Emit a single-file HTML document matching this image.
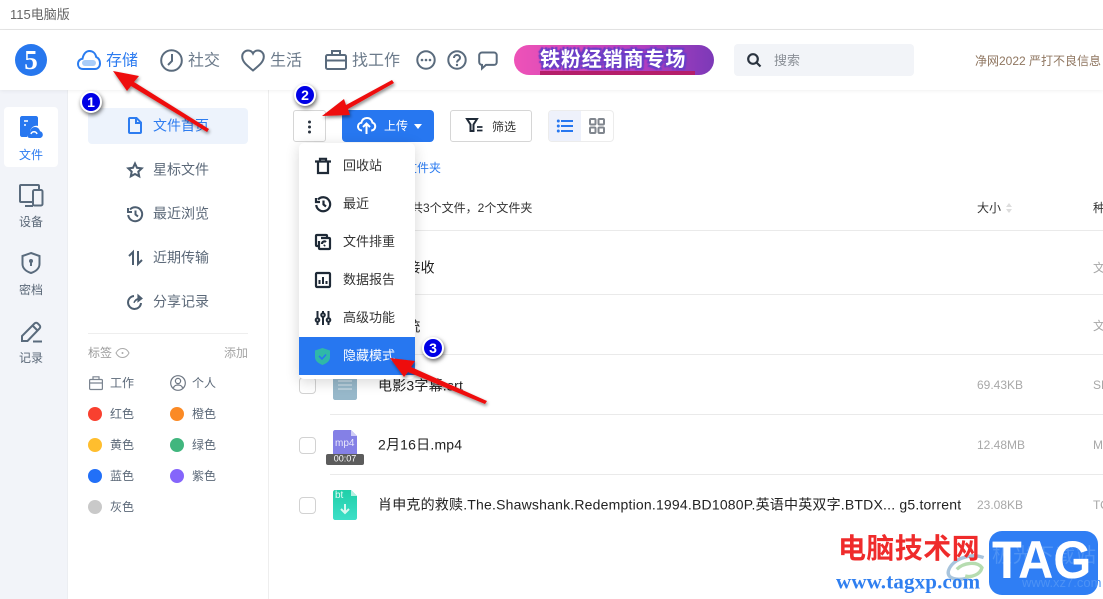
<!DOCTYPE html>
<html lang="zh"><head><meta charset="utf-8"><title>115电脑版</title>
<style>
html,body{margin:0;padding:0;width:1103px;height:599px;overflow:hidden;background:#fff}
body{position:relative;font-family:"Liberation Sans","Noto Sans CJK SC",sans-serif;color:#222}
.a{position:absolute;white-space:nowrap}
.t{position:absolute;white-space:nowrap;transform:translateY(-50%);line-height:1.2}
svg{position:absolute;overflow:visible}
.ic{fill:none;stroke:#5a6b7d;stroke-width:2}
.side{font-size:14px;color:#5b6878}
.rail{font-size:12px;color:#5b6878;width:68px;text-align:center;left:0}
.tag{font-size:13px;color:#5b6878}
.dot{position:absolute;width:14px;height:14px;border-radius:50%}
.mi{font-size:13px;color:#333;left:343px}
.si{fill:none;stroke:#1f2a37;stroke-width:2}
.line{position:absolute;left:330px;right:0;height:1px;background:#eaeaea}
.cb{position:absolute;left:299px;width:15px;height:15px;border:1px solid #d2d2d2;border-radius:4px;background:#fff}
.fn{font-size:14px;color:#222;left:378px;letter-spacing:.2px}
.sz{font-size:12px;color:#a8a8a8;left:977px}
.ty{font-size:12px;color:#a8a8a8;left:1093px}
.badge{position:absolute;width:18px;height:18px;border-radius:50%;background:#0000e6;border:2px solid #fff;box-shadow:1px 2px 4px rgba(0,0,0,.6);color:#fff;font-size:14px;font-weight:bold;text-align:center;line-height:18px}
</style></head><body>

<!-- title bar -->
<div class="a" style="left:0;top:0;width:1103px;height:29px;background:#fff;border-bottom:1px solid #e6e6e6"></div>
<div class="t" style="left:10px;top:15px;font-size:13px;color:#666">115电脑版</div>

<!-- rail + side background -->
<div class="a" style="left:0;top:90px;width:67px;height:509px;background:#f2f4f9;border-right:1px solid #eceef2"></div>
<div class="a" style="left:268px;top:90px;width:1px;height:509px;background:#eeeeee"></div>

<!-- header -->
<div class="a" style="left:0;top:30px;width:1103px;height:60px;background:#fff;box-shadow:0 1px 4px rgba(0,0,0,.06)"></div>
<div class="a" style="left:15px;top:44px;width:32px;height:32px;border-radius:50%;background:#2777ee"></div>
<div class="t" style="left:15px;top:60px;width:32px;text-align:center;font-family:'Liberation Serif',serif;font-weight:bold;font-size:27px;color:#fff">5</div>

<svg style="left:77px;top:49px" width="24" height="22" viewBox="0 0 24 22"><path d="M6 20C2.500 20 1 17.500 1 15c0-3 2-5 4.500-5.300C6.500 5 9 2 12.500 2c3.500 0 6 2.500 6.700 6C21.500 9 23 11.500 23 14.500c0 3-2 5.500-5 5.500z" fill="#fff" stroke="#2a7cf0" stroke-width="2"/><rect x="5" y="11" width="14" height="6" rx="3" fill="#a9cdf8"/></svg>
<div class="t" style="left:106px;top:61px;font-size:16px;color:#2d7cf0">存储</div>
<svg style="left:160px;top:49px" width="23" height="23" viewBox="0 0 23 23"><circle cx="11.500" cy="11.500" r="10.300" class="ic"/><path d="M12 5v7l-4 4" class="ic"/></svg>
<div class="t" style="left:188px;top:61px;font-size:16px;color:#6b7a8a">社交</div>
<svg style="left:241px;top:49px" width="24" height="23" viewBox="0 0 24 23"><path d="M12 21.500C6 16.500 1.200 13 1.200 7.500 1.200 4 4 1.500 7 1.500c2 0 4 1 5 3 1-2 3-3 5-3 3 0 5.800 2.500 5.800 6 0 5.500-4.800 9-10.800 14z" class="ic"/></svg>
<div class="t" style="left:270px;top:61px;font-size:16px;color:#6b7a8a">生活</div>
<svg style="left:325px;top:49px" width="22" height="22" viewBox="0 0 22 22"><rect x="1" y="6" width="20" height="14" rx="1.500" class="ic"/><path d="M7 6V2h8v4M1 11.500h20" class="ic"/></svg>
<div class="t" style="left:352px;top:61px;font-size:16px;color:#6b7a8a">找工作</div>
<svg style="left:416px;top:50px" width="20" height="20" viewBox="0 0 20 20"><circle cx="10" cy="10" r="8.700" class="ic"/><circle cx="6" cy="10" r="1.300" fill="#5a6b7d"/><circle cx="10" cy="10" r="1.300" fill="#5a6b7d"/><circle cx="14" cy="10" r="1.300" fill="#5a6b7d"/></svg>
<svg style="left:447px;top:50px" width="20" height="20" viewBox="0 0 20 20"><circle cx="10" cy="10" r="8.700" class="ic"/><path d="M7 8c0-4 6-4 6 0 0 2-3 2-3 4.500" class="ic"/><circle cx="10" cy="15" r="1.200" fill="#5a6b7d"/></svg>
<svg style="left:478px;top:51px" width="20" height="19" viewBox="0 0 20 19"><path d="M4 1.500h12c1.500 0 2.700 1.200 2.700 2.700v7c0 1.500-1.200 2.700-2.700 2.700H8L4 17.500v-3.600C2.500 13.800 1.200 12.600 1.200 11V4.200C1.200 2.700 2.500 1.500 4 1.500z" class="ic"/></svg>

<!-- banner -->
<div class="a" style="left:514px;top:45px;width:200px;height:30px;border-radius:15px;background:linear-gradient(90deg,#ee52b8 0%,#d64ab8 30%,#b13fc0 65%,#7c39b8 100%);overflow:hidden">
<div class="a" style="left:26px;top:26px;width:155px;height:5px;background:#b51f6a"></div></div>
<div class="t" style="left:540px;top:60px;font-size:20px;font-weight:bold;color:#fff;letter-spacing:.9px;text-shadow:0 0 3px #6a3fc8,2px 2px 1px #6a3fc8,-2px -2px 1px #6a3fc8,2px -2px 1px #6a3fc8,-2px 2px 1px #6a3fc8">铁粉经销商专场</div>

<!-- search -->
<div class="a" style="left:734px;top:44px;width:180px;height:32px;background:#f2f4f8;border-radius:4px"></div>
<svg style="left:746px;top:52px" width="17" height="17" viewBox="0 0 17 17"><circle cx="7" cy="7" r="4.800" fill="none" stroke="#2b3440" stroke-width="2.200"/><path d="M10.500 10.500l4 4" stroke="#2b3440" stroke-width="2.200"/></svg>
<div class="t" style="left:774px;top:61px;font-size:13px;color:#8a8f96">搜索</div>
<div class="t" style="left:975px;top:61px;font-size:12px;color:#8f7660">净网2022 严打不良信息</div>

<!-- rail -->
<div class="a" style="left:4px;top:107px;width:54px;height:60px;background:#fff;border-radius:4px"></div>
<svg style="left:20px;top:116px" width="23" height="23" viewBox="0 0 23 23"><path d="M2 0h14c1 0 2 1 2 2v8c-4-1-8 2-8 6-2 0-3 2-3 4v1H2c-1 0-2-1-2-2V2C0 1 1 0 2 0z" fill="#2777f0"/><path d="M4 5h4M4 9h2" stroke="#fff" stroke-width="1.500"/><path d="M10 22c-2 0-3-1.500-3-3.200 0-1.600 1.300-3 3-3 .5-3 2.500-4.800 5-4.800 2.700 0 4.500 2 5 4.200 1.600.3 2.800 1.700 2.800 3.500 0 2-1.500 3.300-3.500 3.300z" fill="#2777f0"/><path d="M11 18c1-3 5-3 6 0" fill="none" stroke="#fff" stroke-width="1.500"/></svg>
<div class="t rail" style="top:155px;color:#2d7cf0;width:62px">文件</div>
<svg style="left:19px;top:184px" width="25" height="23" viewBox="0 0 25 23"><path d="M14 18H2c-.6 0-1-.4-1-1V2c0-.6.4-1 1-1h17c.6 0 1 .4 1 1v3M6 22h8" class="ic" style="stroke-width:2"/><rect x="14" y="6" width="9.500" height="15.500" rx="1.500" class="ic"/></svg>
<div class="t rail" style="top:222px;width:62px">设备</div>
<svg style="left:21px;top:252px" width="20" height="22" viewBox="0 0 20 22"><path d="M10 1l8.500 3v8c0 4.500-4 7.500-8.500 9-4.500-1.500-8.500-4.500-8.500-9V4z" class="ic"/><circle cx="10" cy="9" r="2" fill="#5a6b7d"/><path d="M10 9v5" class="ic"/></svg>
<div class="t rail" style="top:290px;width:62px">密档</div>
<svg style="left:20px;top:320px" width="23" height="23" viewBox="0 0 23 23"><path d="M2 21v-5L14.500 3.500c1-1 2.300-1 3.300 0l1.700 1.700c1 1 1 2.300 0 3.300L7.500 21zM12.500 5.500l5 5M13 21.500h9" class="ic"/></svg>
<div class="t rail" style="top:358px;width:62px">记录</div>

<!-- side -->
<div class="a" style="left:88px;top:108px;width:160px;height:36px;background:#edf3fc;border-radius:4px"></div>
<svg style="left:128px;top:117px" width="14" height="17" viewBox="0 0 14 17"><path d="M2 1h6.500L13 5.500V15c0 .6-.4 1-1 1H2c-.6 0-1-.4-1-1V2c0-.6.4-1 1-1zM8 1v5h5" fill="none" stroke="#2d7cf0" stroke-width="2"/></svg>
<div class="t side" style="left:153px;top:126px;color:#2d7cf0">文件首页</div>
<svg style="left:127px;top:162px" width="16" height="16" viewBox="0 0 16 16"><path d="M8 1.500l2 4.300 4.700.6-3.400 3.200.9 4.700L8 12l-4.200 2.300.9-4.700L1.300 6.400 6 5.800z" fill="none" stroke="#4d5e70" stroke-width="2"/></svg>
<div class="t side" style="left:153px;top:170px">星标文件</div>
<svg style="left:127px;top:206px" width="16" height="16" viewBox="0 0 16 16"><path d="M3 3.500A7 7 0 1 1 1.200 9M1 2v4h4M8.500 4.500V8.500l2.500 2" fill="none" stroke="#4d5e70" stroke-width="2"/></svg>
<div class="t side" style="left:153px;top:214px">最近浏览</div>
<svg style="left:128px;top:250px" width="15" height="16" viewBox="0 0 15 16"><path d="M5 15V2L1 6M10 1v13l4-4" fill="none" stroke="#4d5e70" stroke-width="2"/></svg>
<div class="t side" style="left:153px;top:258px">近期传输</div>
<svg style="left:127px;top:294px" width="16" height="16" viewBox="0 0 16 16"><path d="M7 2a6.500 6.500 0 1 0 7 7" fill="none" stroke="#4d5e70" stroke-width="2"/><path d="M7 9c.5-3 3-4.500 5-4.500M11 1l4 3.500-4 3z" fill="#4d5e70" stroke="#4d5e70" stroke-width="1.200"/></svg>
<div class="t side" style="left:153px;top:302px">分享记录</div>

<div class="a" style="left:88px;top:333px;width:160px;height:1px;background:#eeeeee"></div>
<div class="t" style="left:88px;top:353px;font-size:12px;color:#9a9a9a">标签</div>
<svg style="left:115px;top:347px" width="15" height="12" viewBox="0 0 15 12"><path d="M1 6c3-6 10-6 13 0-3 6-10 6-13 0z" fill="none" stroke="#aaa"/><circle cx="7.500" cy="6" r="1" fill="#aaa"/></svg>
<div class="t" style="left:224px;top:353px;font-size:12px;color:#a5a5a5">添加</div>

<svg style="left:89px;top:376px" width="14" height="14" viewBox="0 0 14 14"><rect x=".6" y="3.500" width="12.800" height="10" rx="1" fill="none" stroke="#7b8490" stroke-width="1.200"/><path d="M4 3.500V.8h6v2.700M.6 7h12.800" fill="none" stroke="#7b8490" stroke-width="1.200"/></svg>
<div class="t tag" style="left:110px;top:383px;font-size:12px">工作</div>
<svg style="left:170px;top:375px" width="16" height="16" viewBox="0 0 16 16"><circle cx="8" cy="8" r="7.300" fill="none" stroke="#6e7783" stroke-width="1.200"/><circle cx="8" cy="6" r="2.600" fill="none" stroke="#6e7783" stroke-width="1.200"/><path d="M3.500 13c.5-4 8.500-4 9 0" fill="none" stroke="#6e7783" stroke-width="1.200"/></svg>
<div class="t tag" style="left:192px;top:383px;font-size:12px">个人</div>
<div class="dot" style="left:88px;top:407px;background:#f9402f"></div><div class="t tag" style="left:110px;top:414px;font-size:12px">红色</div>
<div class="dot" style="left:170px;top:407px;background:#fb8a25"></div><div class="t tag" style="left:192px;top:414px;font-size:12px">橙色</div>
<div class="dot" style="left:88px;top:438px;background:#ffbe2e"></div><div class="t tag" style="left:110px;top:445px;font-size:12px">黄色</div>
<div class="dot" style="left:170px;top:438px;background:#41b67e"></div><div class="t tag" style="left:192px;top:445px;font-size:12px">绿色</div>
<div class="dot" style="left:88px;top:469px;background:#2270f8"></div><div class="t tag" style="left:110px;top:476px;font-size:12px">蓝色</div>
<div class="dot" style="left:170px;top:469px;background:#8565fb"></div><div class="t tag" style="left:192px;top:476px;font-size:12px">紫色</div>
<div class="dot" style="left:88px;top:500px;background:#c9c9c9"></div><div class="t tag" style="left:110px;top:507px;font-size:12px">灰色</div>

<!-- toolbar -->
<div class="a" style="left:293px;top:110px;width:31px;height:30px;border:1px solid #d6d6d6;border-radius:3px;background:#fff"></div>
<svg style="left:307px;top:120px" width="5" height="14" viewBox="0 0 5 14"><circle cx="2.500" cy="2" r="1.500" fill="#2b3440"/><circle cx="2.500" cy="7" r="1.500" fill="#2b3440"/><circle cx="2.500" cy="12" r="1.500" fill="#2b3440"/></svg>
<div class="a" style="left:342px;top:110px;width:92px;height:32px;background:#2777f0;border-radius:4px"></div>
<svg style="left:357px;top:116px" width="19" height="19" viewBox="0 0 19 19"><path d="M5 14.500C2.800 14.500 1 13 1 10.500c0-2 1.500-3.500 3.300-3.700C5 4 7 2 10 2c3 0 5 2 5.500 4.700 1.500.4 2.700 1.800 2.700 3.800 0 2.300-1.700 4-4 4" fill="none" stroke="#fff" stroke-width="2"/><path d="M9.500 18V8M6 11l3.500-3.500L13 11" fill="none" stroke="#fff" stroke-width="2"/></svg>
<div class="t" style="left:384px;top:126px;font-size:12px;color:#fff">上传</div>
<div class="a" style="left:414px;top:124px;width:0;height:0;border-left:4px solid transparent;border-right:4px solid transparent;border-top:5px solid #fff"></div>
<div class="a" style="left:450px;top:110px;width:80px;height:30px;border:1px solid #d6d6d6;border-radius:3px;background:#fff"></div>
<svg style="left:466px;top:118px" width="17" height="15" viewBox="0 0 17 15"><path d="M1 1h10L7.500 6.500V13h-3V6.500z" fill="none" stroke="#1f2a37" stroke-width="2"/><path d="M11 9h5.500M11 12.500h5.500" stroke="#1f2a37" stroke-width="1.800"/></svg>
<div class="t" style="left:492px;top:127px;font-size:12px;color:#333">筛选</div>
<div class="a" style="left:548px;top:110px;width:64px;height:30px;border:1px solid #ececec;border-radius:4px;background:#fff"></div>
<div class="a" style="left:549px;top:111px;width:32px;height:30px;background:#eef1fb;border-radius:3px 0 0 3px"></div>
<svg style="left:557px;top:119px" width="16" height="14" viewBox="0 0 16 14"><path d="M4 2h12M4 7h12M4 12h12" stroke="#2777f0" stroke-width="2"/><circle cx="1.300" cy="2" r="1.500" fill="#2777f0"/><circle cx="1.300" cy="7" r="1.500" fill="#2777f0"/><circle cx="1.300" cy="12" r="1.500" fill="#2777f0"/></svg>
<svg style="left:589px;top:118px" width="16" height="16" viewBox="0 0 16 16" fill="none" stroke="#80868e" stroke-width="2"><rect x="1" y="1" width="5.500" height="5.500" rx="1"/><rect x="9.500" y="1" width="5.500" height="5.500" rx="1"/><rect x="1" y="9.500" width="5.500" height="5.500" rx="1"/><rect x="9.500" y="9.500" width="5.500" height="5.500" rx="1"/></svg>

<!-- content -->
<div class="t" style="left:381px;top:168px;font-size:12px;color:#2d7cf0">全部文件夹</div>
<div class="t" style="left:411px;top:208px;font-size:12px;color:#333">共3个文件，2个文件夹</div>
<div class="t" style="left:977px;top:208px;font-size:12px;color:#333">大小</div>
<div class="a" style="left:1006px;top:203px;width:0;height:0;border-left:3px solid transparent;border-right:3px solid transparent;border-bottom:4px solid #ddd"></div>
<div class="a" style="left:1006px;top:209px;width:0;height:0;border-left:3px solid transparent;border-right:3px solid transparent;border-top:4px solid #ddd"></div>
<div class="t" style="left:1093px;top:208px;font-size:12px;color:#333">种类</div>
<div class="line" style="top:230px"></div><div class="line" style="top:294px"></div><div class="line" style="top:354px"></div><div class="line" style="top:414px"></div><div class="line" style="top:474px"></div>

<div class="t fn" style="top:268px">文件接收</div><div class="t ty" style="top:268px">文件夹</div>
<div class="t fn" style="top:327px">云系统</div><div class="t ty" style="top:326px">文件夹</div>

<div class="cb" style="top:377px"></div>
<svg style="left:333px;top:370px" width="24" height="30" viewBox="0 0 24 30"><path d="M0 0h24v28c0 1-1 2-2 2H2c-1 0-2-1-2-2z" fill="#97b8ca"/><path d="M5 11h14M5 15h14M5 19h14" stroke="#c3d6e0" stroke-width="1.500"/></svg>
<div class="t fn" style="top:386px">电影3字幕.srt</div><div class="t sz" style="top:385px">69.43KB</div><div class="t ty" style="top:385px">SRT</div>

<div class="cb" style="top:437px"></div>
<svg style="left:333px;top:430px" width="24" height="30" viewBox="0 0 24 30"><path d="M2 0h16l6 6v22c0 1-1 2-2 2H2c-1 0-2-1-2-2V2C0 1 1 0 2 0z" fill="#8480e6"/><path d="M18 0l6 6h-6z" fill="#cfcdf6"/></svg>
<div class="t" style="left:335px;top:444px;font-size:10px;color:#e8e8fb">mp4</div>
<div class="a" style="left:326px;top:454px;width:38px;height:11px;background:#5c5c5c;border-radius:2px"></div>
<div class="t" style="left:326px;top:459px;width:38px;text-align:center;font-size:9px;color:#fff">00:07</div>
<div class="t fn" style="top:445px">2月16日.mp4</div><div class="t sz" style="top:445px">12.48MB</div><div class="t ty" style="top:445px">MP4</div>

<div class="cb" style="top:497px"></div>
<svg style="left:333px;top:490px" width="24" height="30" viewBox="0 0 24 30"><defs><linearGradient id="g" x1="0" y1="0" x2="0" y2="1"><stop offset="0" stop-color="#1fcfa8"/><stop offset="1" stop-color="#3ddfc8"/></linearGradient></defs><path d="M2 0h16l6 6v22c0 1-1 2-2 2H2c-1 0-2-1-2-2V2C0 1 1 0 2 0z" fill="url(#g)"/><path d="M18 0l6 6h-6z" fill="#b4f0e2"/><path d="M12 14v9M8 19l4 4 4-4" fill="none" stroke="#d8f8f0" stroke-width="2"/></svg>
<div class="t" style="left:335px;top:496px;font-size:10px;color:#e4fbf5">bt</div>
<div class="t fn" style="top:505px">肖申克的救赎.The.Shawshank.Redemption.1994.BD1080P.英语中英双字.BTDX... g5.torrent</div><div class="t sz" style="top:505px">23.08KB</div><div class="t ty" style="top:505px">TORRENT</div>

<!-- menu -->
<div class="a" style="left:299px;top:143px;width:116px;height:236px;background:#fff;border-radius:5px;box-shadow:0 3px 14px rgba(0,0,0,.16)"></div>
<div class="a" style="left:299px;top:337px;width:116px;height:38px;background:#2777f0"></div>
<svg style="left:315px;top:158px" width="16" height="16" viewBox="0 0 16 16"><path d="M0 3.500h16M5 3.500V.8h6v2.700M3 3.500V15h10V3.500" class="si" style="stroke-width:2.200"/></svg>
<div class="t mi" style="top:166px">回收站</div>
<svg style="left:315px;top:196px" width="16" height="16" viewBox="0 0 16 16"><path d="M3 3.500A7 7 0 1 1 1.200 9M1 2v4h4M8.500 4.500V8.500l2.500 2" class="si" style="stroke-width:2.200"/></svg>
<div class="t mi" style="top:204px">最近</div>
<svg style="left:315px;top:234px" width="16" height="16" viewBox="0 0 16 16"><path d="M4 12H2c-.6 0-1-.4-1-1V2c0-.6.4-1 1-1h9c.6 0 1 .4 1 1v2M6 4h8c.6 0 1 .4 1 1v9c0 .6-.4 1-1 1H5c-.6 0-1-.4-1-1V7M7 10c0-3 3-3 4-2M10 11l-1 1" class="si" style="stroke-width:2.200"/></svg>
<div class="t mi" style="top:242px">文件排重</div>
<svg style="left:315px;top:272px" width="16" height="16" viewBox="0 0 16 16"><rect x="1" y="1" width="14" height="14" rx="1" class="si" style="stroke-width:2.200"/><path d="M4.500 12V8M8 12V5M11.500 12V9" class="si"/></svg>
<div class="t mi" style="top:280px">数据报告</div>
<svg style="left:315px;top:310px" width="16" height="16" viewBox="0 0 16 16"><path d="M2.500 1v7M2.500 12v3M8 1v2M8 7v8M13.500 1v7M13.500 12v3" class="si"/><circle cx="2.500" cy="10" r="1.800" class="si"/><circle cx="8" cy="5" r="1.800" class="si"/><circle cx="13.500" cy="10" r="1.800" class="si"/></svg>
<div class="t mi" style="top:318px">高级功能</div>
<svg style="left:315px;top:348px" width="15" height="17" viewBox="0 0 15 17"><path d="M7.500 0L15 2.500V9c0 4-3.500 6.500-7.500 8C3.500 15.500 0 13 0 9V2.500z" fill="#2fb8a8"/><path d="M4 8l3 3 4-4.500" fill="none" stroke="#2777f0" stroke-width="1.600"/></svg>
<div class="t mi" style="top:356px;color:#fff">隐藏模式</div>

<!-- arrows -->
<svg style="left:0;top:0" width="1103" height="599" viewBox="0 0 1103 599">
<defs><filter id="s" x="-20%" y="-20%" width="140%" height="140%"><feDropShadow dx="1" dy="2" stdDeviation="1.500" flood-color="#000" flood-opacity=".45"/></filter></defs>
<g fill="#ee1111" filter="url(#s)">
<polygon points="113,71 139,76 134,82 209,129 207,132 131,86 127,91"/>
<polygon points="322,116 344,99 346,105 392,80 394,83 348,109 350,115"/>
<polygon points="390,358 415,361 411,367 487,401 485,404 408,372 404,377"/>
</g></svg>
<div class="badge" style="left:80px;top:91px">1</div>
<div class="badge" style="left:294px;top:84px">2</div>
<div class="badge" style="left:422px;top:337px">3</div>

<!-- watermark -->
<svg style="left:945px;top:552px" width="42" height="33" viewBox="0 0 50 38"><path d="M46 6C30 0 8 8 4 22c-2 9 10 12 24 8" fill="none" stroke="#a8c4dc" stroke-width="4"/><path d="M14 20c8-8 24-10 30-2-2 8-12 12-20 10" fill="none" stroke="#b6dcb0" stroke-width="4"/></svg>
<div class="t" style="left:838px;top:549px;font-size:28px;font-weight:bold;color:#ef2b2b;letter-spacing:.4px">电脑技术网</div>
<div class="t" style="left:836px;top:582px;font-family:'Liberation Serif',serif;font-size:21px;font-weight:bold;color:#2f7ff0;letter-spacing:.15px">www.tagxp.com</div>
<div class="a" style="left:989px;top:531px;width:109px;height:64px;background:#2f7ef4;border-radius:13px"></div>
<div class="t" style="left:992px;top:556px;color:#4d92f5;font-size:20px;letter-spacing:1px">极光下载站</div>
<div class="t" style="left:1022px;top:583px;color:#4d92f5;font-size:13px">www.xz7.com</div>
<div class="t" style="left:992px;top:561px;font-size:53px;font-weight:bold;color:#fff;transform:translateY(-50%) scaleX(.92);transform-origin:left center">TAG</div>
</body></html>
